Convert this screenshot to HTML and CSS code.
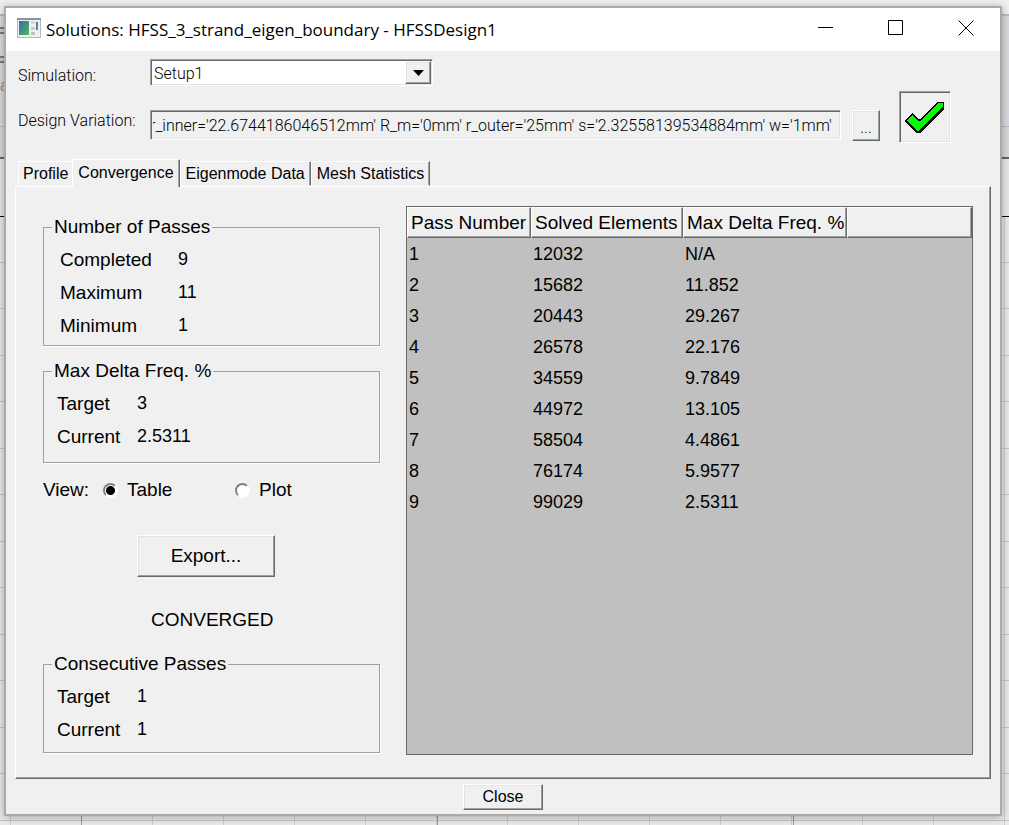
FILE: index.html
```html
<!DOCTYPE html>
<html lang="en">

<head>
    <meta charset="utf-8">
    <title>Solutions: HFSS_3_strand_eigen_boundary - HFSSDesign1</title>
    <link rel="stylesheet" href="styles.css">
</head>

<body>
    <div class="toolbar">
        <i class="nub"></i>
        <i class="nub"></i>
        <span class="crumb">at</span>
    </div>
    <div class="window">
        <div class="titlebar">
            <svg class="app-icon" width="24" height="20" viewBox="0 0 24 20">
                <defs>
                    <linearGradient id="pane" x1="0" y1="0" x2="1" y2="1">
                        <stop offset="0" stop-color="#2c6cb0"/>
                        <stop offset="1" stop-color="#55b85c"/>
                    </linearGradient>
                </defs>
                <rect x="0.5" y="0.5" width="23" height="19" fill="#eef0f2" stroke="#b4b8bc"/>
                <path d="M0 1h24" stroke="#8c9097" stroke-width="2"/>
                <rect x="2" y="3" width="10" height="14" fill="url(#pane)"/>
                <rect x="14" y="3" width="4" height="3" fill="#d8d8d8"/>
                <rect x="14" y="9" width="4" height="3" fill="#cccccc"/>
                <rect x="14" y="14" width="4" height="3" fill="#c4c4c4"/>
                <rect x="19" y="4" width="2" height="8" fill="url(#pane)"/>
            </svg>
            <h1>Solutions: HFSS_3_strand_eigen_boundary - HFSSDesign1</h1>
            <div class="controls">
                <button aria-label="Minimize"><svg width="16" height="16"><path d="M0 7.500h15"/></svg></button>
                <button aria-label="Maximize"><svg width="16" height="16"><path d="M.5 .5h14v14h-14z"/></svg></button>
                <button aria-label="Close window"><svg width="16" height="16"><path d="M.5 .5l15 15M15.500 .5l-15 15"/></svg></button>
            </div>
        </div>

        <div class="setup">
            <div class="fields">
                <label for="simulation">Simulation:</label>
                <div class="combo sunken">
                    <select id="simulation">
                        <option>Setup1</option>
                    </select>
                    <span class="arrow raised"><svg width="11" height="6"><path d="M0 0h11L5.500 6z"/></svg></span>
                </div>
                <label for="variation">Design Variation:</label>
                <div class="variation">
                    <input class="sunken" id="variation" type="text" readonly value="r_inner='22.6744186046512mm' R_m='0mm' r_outer='25mm' s='2.32558139534884mm' w='1mm'">
                    <button class="raised">...</button>
                </div>
            </div>
            <div class="status sunken">
                <svg width="40" height="32" viewBox="0 0 40 32" shape-rendering="crispEdges">
                    <path d="M0 20l7-8 6 6h2L32 1h7v7L17 30l-2 2h-4z" fill="#000"/>
                    <path d="M2 20l5-6 6 6h3L33 2h5v4L15 28l-2 2h-1z" fill="#0f0"/>
                </svg>
            </div>
        </div>

        <div class="tabs">
            <button>Profile</button>
            <button class="active">Convergence</button>
            <button>Eigenmode Data</button>
            <button>Mesh Statistics</button>
        </div>

        <div class="panel">
            <div class="summary">
                <fieldset class="passes">
                    <legend>Number of Passes</legend>
                    <dl>
                        <dt>Completed</dt><dd>9</dd>
                        <dt>Maximum</dt><dd>11</dd>
                        <dt>Minimum</dt><dd>1</dd>
                    </dl>
                </fieldset>
                <fieldset class="delta">
                    <legend>Max Delta Freq. %</legend>
                    <dl>
                        <dt>Target</dt><dd>3</dd>
                        <dt>Current</dt><dd>2.5311</dd>
                    </dl>
                </fieldset>
                <div class="view">
                    <span>View:</span>
                    <label><input type="radio" name="view" checked>Table</label>
                    <label><input type="radio" name="view">Plot</label>
                </div>
                <button class="export raised">Export...</button>
                <p class="state">CONVERGED</p>
                <fieldset class="consecutive">
                    <legend>Consecutive Passes</legend>
                    <dl>
                        <dt>Target</dt><dd>1</dd>
                        <dt>Current</dt><dd>1</dd>
                    </dl>
                </fieldset>
            </div>

            <div class="grid">
                <table>
                    <thead>
                        <tr><th>Pass Number</th><th>Solved Elements</th><th>Max Delta Freq. %</th><th></th></tr>
                    </thead>
                    <tbody>
                        <tr><td>1</td><td>12032</td><td>N/A</td><td></td></tr>
                        <tr><td>2</td><td>15682</td><td>11.852</td><td></td></tr>
                        <tr><td>3</td><td>20443</td><td>29.267</td><td></td></tr>
                        <tr><td>4</td><td>26578</td><td>22.176</td><td></td></tr>
                        <tr><td>5</td><td>34559</td><td>9.7849</td><td></td></tr>
                        <tr><td>6</td><td>44972</td><td>13.105</td><td></td></tr>
                        <tr><td>7</td><td>58504</td><td>4.4861</td><td></td></tr>
                        <tr><td>8</td><td>76174</td><td>5.9577</td><td></td></tr>
                        <tr><td>9</td><td>99029</td><td>2.5311</td><td></td></tr>
                    </tbody>
                </table>
            </div>
        </div>

        <div class="footer">
            <button class="raised">Close</button>
        </div>
    </div>
</body>

</html>
```

FILE: styles.css
```css
* {
    box-sizing: border-box;
}

body {
    margin: 0;
    min-height: 100vh;
    padding: 6px 7px 9px 4px;
    display: flex;
    position: relative;
    color: #000;
    font-family: "Liberation Sans", Arial, sans-serif;
    font-size: 19px;
    line-height: 22px;
    /* modeler canvas behind the dialog */
    background:
        repeating-linear-gradient(90deg, transparent 0 81px, #999 81px 82px, transparent 82px 356px),
        repeating-linear-gradient(90deg, transparent 0 10px, #ccc 10px 11px, transparent 11px 71px),
        repeating-linear-gradient(transparent 0 29px, #c4c4c4 29px 30px, transparent 30px 76px, #c4c4c4 76px 77px, transparent 77px 93px),
        #e9e9e9;
}

button, input, select {
    font-family: inherit;
    color: inherit;
    padding: 0;
    margin: 0;
}

button {
    background: #f0f0f0;
    border: 0;
}

.toolbar {
    position: absolute;
    inset: 0 0 auto 0;
    height: 217px;
    overflow: hidden;
    border-bottom: 1px solid #000;
    background: linear-gradient(#f0f0f0 0 14px, #b8b8c8 14px 16px, #d8d8de 16px 126px, #b8b8c8 126px 127px, #d8d8d8 127px 157px, #666 157px 159px, #e6e6e6 159px);
}

.nub {
    display: block;
    width: 6px;
    height: 7px;
    margin-top: 27px;
    border: 2px solid #777;
    border-left: 0;
    background: #ccc;
}

.nub + .nub {
    margin-top: 22px;
}

.crumb {
    display: block;
    margin-top: 12px;
    font-size: 16px;
    color: #b08860;
}

.window {
    position: relative;
    flex: 1;
    display: flex;
    flex-direction: column;
    background: #f0f0f0;
    border: 2px solid #aaa;
    box-shadow: 0 1px 8px rgba(0, 0, 0, .3);
}

.titlebar {
    display: flex;
    align-items: center;
    height: 43px;
    padding: 0 26px 3px 11px;
    background: #fff;
}

.titlebar h1 {
    margin: 3px 0 0 5px;
    font: 17px/24px "Open Sans", "Noto Sans", sans-serif;
}

.controls {
    display: flex;
    gap: 54px;
    margin-left: auto;
}

.controls button {
    display: flex;
    background: none;
}

.controls path {
    fill: none;
    stroke: #000;
}

/* win32 bevels */
.sunken {
    border: 1px solid;
    border-color: #a0a0a0 #fff #fff #a0a0a0;
    box-shadow: inset 1px 1px #696969, inset -1px -1px #e3e3e3;
}

.raised {
    border: 1px solid;
    border-color: #fff #696969 #696969 #fff;
    box-shadow: inset -1px -1px #a0a0a0, inset 1px 1px #e3e3e3;
}

.setup {
    display: flex;
    gap: 19px;
    padding: 8px 49px 0 12px;
}

.fields {
    flex: 1;
    display: grid;
    grid-template-columns: 132px 1fr;
    grid-template-rows: 51px 31px;
    align-items: start;
    font-family: Roboto, "Liberation Sans", sans-serif;
    font-size: 16px;
    font-weight: 300;
}

.fields label {
    padding-top: 6px;
}

.fields .combo ~ label {
    padding-top: 0;
}

.combo {
    display: flex;
    width: 283px;
    height: 27px;
    padding: 1px;
    background: #fff;
}

.combo select {
    flex: 1;
    appearance: none;
    border: 0;
    padding: 1px 0 0 2px;
    background: transparent;
    font-size: 16px;
    font-weight: 300;
}

.arrow {
    display: flex;
    align-items: center;
    justify-content: center;
    width: 26px;
    background: #f0f0f0;
    pointer-events: none;
}

.variation {
    display: flex;
    gap: 11px;
}

.variation input {
    flex: 1;
    min-width: 0;
    height: 30px;
    padding: 0 2px;
    background: #f0f0f0;
    font-size: 16px;
    font-weight: 300;
    text-indent: -3px;
}

.variation button {
    width: 28px;
    height: 31px;
    padding-top: 4px;
    font-size: 16px;
    font-weight: 300;
}

.status {
    display: flex;
    align-items: center;
    justify-content: center;
    width: 52px;
    height: 52px;
    margin-top: 32px;
}

.tabs {
    display: flex;
    align-items: flex-end;
    height: 43px;
    padding-left: 12px;
}

.tabs button {
    height: 25px;
    padding: 0 5px;
    border: 1px solid;
    border-color: #fff #696969 transparent #fff;
    box-shadow: inset -1px 0 #a0a0a0;
    font-size: 16px;
}

.tabs .active {
    position: relative;
    height: 28px;
    margin-bottom: -1px;
    padding: 0 5px 2px;
    border-bottom: 0;
}

.tabs button:first-child {
    padding: 0 4px;
    border-right: 0;
    box-shadow: none;
}

.panel {
    flex: 1;
    display: grid;
    grid-template-columns: 337px 1fr;
    gap: 26px;
    margin: 0 9px;
    padding: 19px 17px 23px 27px;
    border: 1px solid;
    border-color: #fff #696969 #696969 #fff;
    box-shadow: inset -1px -1px #a0a0a0;
}

.summary {
    display: flex;
    flex-direction: column;
    padding-top: 10px;
}

fieldset {
    margin: 0;
    padding: 5px 13px 0;
    border: 1px solid #a0a0a0;
    box-shadow: 1px 1px #fff;
}

legend {
    margin-left: -5px;
    padding: 0 2px;
}

fieldset dl {
    display: grid;
    grid-template-columns: 80px 1fr;
    margin: 0;
    line-height: 33px;
}

.passes dl {
    grid-template-columns: 118px 1fr;
    padding-left: 3px;
}

fieldset dd {
    margin: 0;
    font-size: 18px;
}

.passes {
    height: 130px;
}

.delta {
    height: 103px;
    margin-top: 14px;
}

.view {
    display: flex;
    margin-top: 16px;
}

.view span {
    width: 60px;
}

.view label {
    display: flex;
    align-items: center;
    gap: 9px;
    width: 132px;
}

.view input {
    appearance: none;
    width: 15px;
    height: 15px;
    border: 2px solid;
    border-color: #808080 #fff #fff #808080;
    border-radius: 50%;
    background: #fff;
}

.view input:checked {
    background: radial-gradient(#000 0 4px, #fff 5px);
}

.export {
    width: 138px;
    height: 42px;
    margin: 34px 0 0 94px;
    font-size: 19px;
}

.state {
    margin: 32px 0 0 108px;
    font-size: 19px;
}

.consecutive {
    height: 100px;
    margin-top: 22px;
}

.grid {
    border: 1px solid #696969;
    background: #c0c0c0;
}

table {
    width: 100%;
    border-spacing: 0;
    table-layout: fixed;
}

th {
    height: 31px;
    padding: 0 0 0 3px;
    border: 1px solid;
    border-color: #fff #696969 #696969 #fff;
    box-shadow: inset -1px -1px #a0a0a0;
    background: #f0f0f0;
    font-weight: normal;
    text-align: left;
    white-space: nowrap;
}

th:nth-child(1) {
    width: 124px;
}

th:nth-child(2) {
    width: 152px;
}

th:nth-child(3) {
    width: 164px;
}

td {
    height: 31px;
    padding: 0 2px;
    font-size: 18px;
}

.footer {
    display: flex;
    justify-content: center;
    padding: 5px 0 4px;
}

.footer button {
    width: 80px;
    height: 26px;
    font-size: 16px;
}
```
